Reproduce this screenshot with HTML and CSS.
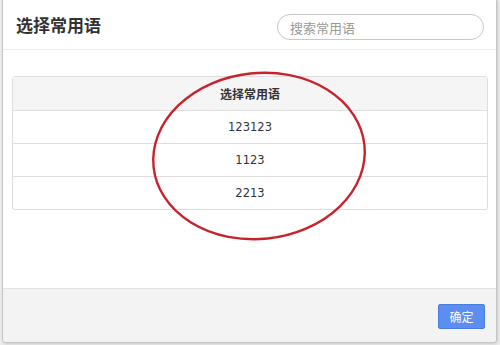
FILE: index.html
```html
<!DOCTYPE html>
<html lang="zh-CN">
<head>
    <meta charset="UTF-8">
    <title>选择常用语</title>
    <link rel="stylesheet" href="styles.css">
</head>
<body>
    <div class="modal">
        <div class="modal-header">
            <h2 class="modal-title">选择常用语</h2>
            <input type="text" class="search-input" placeholder="搜索常用语">
        </div>

        <div class="modal-body">
            <table class="phrase-table">
                <thead>
                    <tr><th>选择常用语</th></tr>
                </thead>
                <tbody>
                    <tr><td>123123</td></tr>
                    <tr><td>1123</td></tr>
                    <tr><td>2213</td></tr>
                </tbody>
            </table>
        </div>

        <div class="modal-footer">
            <button class="ok-button">确定</button>
        </div>

        <!-- red annotation circle -->
        <svg class="mark" width="500" height="345" viewBox="0 0 500 345">
            <ellipse cx="259" cy="156" rx="106" ry="83" transform="rotate(-6 259 156)" fill="none" stroke="#c8232c" stroke-width="2.4"/>
        </svg>
    </div>
</body>
</html>
```

FILE: styles.css
```css
body {
    margin: 0;
    background-color: #ececec;
    font-family: "Noto Sans CJK SC", "Liberation Sans", sans-serif;
    width: 500px;
    height: 345px;
    overflow: hidden;
}

.modal {
    position: relative;
    margin-left: 2px;
    width: 493px;
    height: 342px;
    background-color: #fff;
    border: 1px solid #c4c4c4;
    border-top: none;
    border-radius: 0 0 4px 4px;
    box-shadow: 1px 1px 3px rgba(0,0,0,0.15);
    display: flex;
    flex-direction: column;
}

.modal-header {
    height: 50px;
    border-bottom: 1px solid #ebebeb;
    display: flex;
    align-items: center;
    justify-content: space-between;
    padding: 0 12px 0 13px;
    box-sizing: border-box;
}

.modal-title {
    margin: 0;
    font-size: 17px;
    font-weight: bold;
    color: #333;
}

.search-input {
    width: 207px;
    height: 26px;
    box-sizing: border-box;
    border: 1px solid #c8c8c8;
    border-radius: 13px;
    padding: 0 12px;
    font-family: "Noto Sans CJK SC", "Liberation Sans", sans-serif;
    font-size: 13px;
    outline: none;
    margin-top: 5px;
}

.search-input::placeholder {
    color: #999;
}

.modal-body {
    flex: 1;
    padding: 26px 8px 0 9px;
}

.phrase-table {
    width: 100%;
    border-collapse: separate;
    border-spacing: 0;
    border: 1px solid #dedede;
    border-radius: 3px;
    font-size: 12px;
    color: #333;
}

.phrase-table th,
.phrase-table td {
    height: 32px;
    text-align: center;
    padding: 0;
}

.phrase-table th {
    height: 33px;
    background-color: #f5f5f5;
    font-weight: bold;
    border-bottom: 1px solid #dedede;
}

.phrase-table td {
    font-family: "DejaVu Sans", sans-serif;
    font-size: 11.5px;
    border-bottom: 1px solid #dedede;
}

.phrase-table tr:last-child td {
    border-bottom: none;
}

.modal-footer {
    height: 53px;
    background-color: #f3f3f3;
    border-top: 1px solid #e2e2e2;
    display: flex;
    align-items: center;
    justify-content: flex-end;
    padding-right: 11px;
    border-radius: 0 0 4px 4px;
}

.ok-button {
    width: 47px;
    height: 25px;
    background-color: #5b8ef0;
    color: #fff;
    border: 1px solid #4a7de0;
    border-radius: 2px;
    font-family: "Noto Sans CJK SC", sans-serif;
    font-size: 12px;
    padding: 0;
    margin-top: 1px;
}

.mark {
    position: absolute;
    left: -3px;
    top: 0;
    pointer-events: none;
}
```
